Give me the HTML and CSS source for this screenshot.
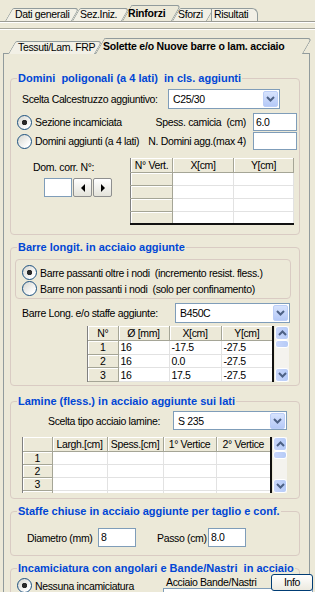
FILE: index.html
```html
<!DOCTYPE html>
<html lang="it">
<head>
    <meta charset="UTF-8">
    <title>Rinforzi</title>
    <link rel="stylesheet" href="styles.css">
</head>
<body>

    <!-- Main tabs -->
    <div class="tabstrip top">
        <div class="tab t-dati">Dati generali</div>
        <div class="tab t-sez">Sez.Iniz.</div>
        <div class="tab t-rinf active">Rinforzi</div>
        <div class="tab t-sforzi">Sforzi</div>
        <div class="tab t-ris">Risultati</div>
    </div>

    <div class="outer">
        <div class="etched"></div>

        <!-- Sub tabs -->
        <div class="tabstrip sub">
            <div class="tab t-tess">Tessuti/Lam. FRP</div>
            <div class="tab t-sol active">Solette e/o Nuove barre o lam. acciaio</div>
        </div>

        <div class="panel">

            <!-- Domini poligonali -->
            <fieldset class="group g-domini">
                <legend>Domini  poligonali (a 4 lati)  in cls. aggiunti</legend>
                <div class="row row-calc">
                    <span class="lbl">Scelta Calcestruzzo aggiuntivo:</span>
                    <div class="combo w-calc">
                        <span class="val">C25/30</span>
                        <span class="drop"><svg width="9" height="6" viewBox="0 0 9 6"><path d="M1 1 L4.5 4.5 L8 1" fill="none" stroke="#4d6185" stroke-width="2"/></svg></span>
                    </div>
                </div>
                <div class="row row-opt first">
                    <span class="radio on">Sezione incamiciata</span>
                    <span class="lbl push">Spess. camicia  (cm)</span>
                    <div class="field w-spess">6.0</div>
                </div>
                <div class="row row-opt">
                    <span class="radio">Domini aggiunti (a 4 lati)</span>
                    <span class="lbl push">N. Domini agg.(max 4)</span>
                    <div class="field w-spess"></div>
                </div>
                <div class="row row-dom">
                    <div class="dom-left">
                        <span class="lbl">Dom. corr. N°:</span>
                        <div class="spin">
                            <div class="field w-spin"></div>
                            <span class="arrow-btn"><i class="tri-left"></i></span>
                            <span class="arrow-btn"><i class="tri-right"></i></span>
                        </div>
                    </div>
                    <table class="grid grid-vert">
                        <colgroup><col class="c42"><col class="c61"><col class="c60"></colgroup>
                        <tr><th>N° Vert.</th><th>X[cm]</th><th>Y[cm]</th></tr>
                        <tr><th></th><td></td><td></td></tr>
                        <tr><th></th><td></td><td></td></tr>
                        <tr><th></th><td></td><td></td></tr>
                        <tr><th></th><td></td><td></td></tr>
                    </table>
                </div>
            </fieldset>

            <!-- Barre longitudinali -->
            <fieldset class="group g-barre">
                <legend>Barre longit. in acciaio aggiunte</legend>
                <div class="subframe">
                    <span class="radio on">Barre passanti oltre i nodi  (incremento resist. fless.)</span>
                    <span class="radio">Barre non passanti i nodi  (solo per confinamento)</span>
                </div>
                <div class="row row-acc">
                    <span class="lbl">Barre Long. e/o staffe aggiunte:</span>
                    <div class="combo w-b450">
                        <span class="val">B450C</span>
                        <span class="drop"><svg width="9" height="6" viewBox="0 0 9 6"><path d="M1 1 L4.5 4.5 L8 1" fill="none" stroke="#4d6185" stroke-width="2"/></svg></span>
                    </div>
                </div>
                <div class="gridbox gb-barre">
                    <table class="grid">
                        <colgroup><col class="c30"><col class="c51"><col class="c52"><col class="c52"></colgroup>
                        <tr><th>N°</th><th>Ø [mm]</th><th>X[cm]</th><th>Y[cm]</th></tr>
                        <tr><th>1</th><td>16</td><td>-17.5</td><td>-27.5</td></tr>
                        <tr><th>2</th><td>16</td><td>0.0</td><td>-27.5</td></tr>
                        <tr><th>3</th><td>16</td><td>17.5</td><td>-27.5</td></tr>
                    </table>
                    <div class="vscroll">
                        <span class="sb-btn"><svg width="9" height="6" viewBox="0 0 9 6"><path d="M1 5 L4.5 1.5 L8 5" fill="none" stroke="#4d6185" stroke-width="2"/></svg></span>
                        <span class="sb-thumb"></span>
                        <span class="sb-track"></span>
                        <span class="sb-btn"><svg width="9" height="6" viewBox="0 0 9 6"><path d="M1 1 L4.5 4.5 L8 1" fill="none" stroke="#4d6185" stroke-width="2"/></svg></span>
                    </div>
                </div>
            </fieldset>

            <!-- Lamine -->
            <fieldset class="group g-lamine">
                <legend>Lamine (fless.) in acciaio aggiunte sui lati</legend>
                <div class="row row-lam">
                    <span class="lbl">Scelta tipo acciaio lamine:</span>
                    <div class="combo w-s235">
                        <span class="val">S 235</span>
                        <span class="drop"><svg width="9" height="6" viewBox="0 0 9 6"><path d="M1 1 L4.5 4.5 L8 1" fill="none" stroke="#4d6185" stroke-width="2"/></svg></span>
                    </div>
                </div>
                <div class="gridbox gb-lamine">
                    <table class="grid">
                        <colgroup><col class="c29"><col class="c55"><col class="c56"><col class="c53"><col class="c55"></colgroup>
                        <tr><th></th><th>Largh.[cm]</th><th>Spess.[cm]</th><th>1° Vertice</th><th>2° Vertice</th></tr>
                        <tr><th>1</th><td></td><td></td><td></td><td></td></tr>
                        <tr><th>2</th><td></td><td></td><td></td><td></td></tr>
                        <tr><th>3</th><td></td><td></td><td></td><td></td></tr>
                        <tr><th></th><td></td><td></td><td></td><td></td></tr>
                    </table>
                    <div class="vscroll">
                        <span class="sb-btn"><svg width="9" height="6" viewBox="0 0 9 6"><path d="M1 5 L4.5 1.5 L8 5" fill="none" stroke="#4d6185" stroke-width="2"/></svg></span>
                        <span class="sb-thumb"></span>
                        <span class="sb-track"></span>
                        <span class="sb-btn"><svg width="9" height="6" viewBox="0 0 9 6"><path d="M1 1 L4.5 4.5 L8 1" fill="none" stroke="#4d6185" stroke-width="2"/></svg></span>
                    </div>
                </div>
            </fieldset>

            <!-- Staffe -->
            <fieldset class="group g-staffe">
                <legend>Staffe chiuse in acciaio aggiunte per taglio e conf.</legend>
                <div class="row row-staffe">
                    <span class="lbl l-diam">Diametro (mm)</span>
                    <div class="field w-staffa">8</div>
                    <span class="lbl l-passo">Passo (cm)</span>
                    <div class="field w-staffa">8.0</div>
                </div>
            </fieldset>

            <!-- Incamiciatura -->
            <fieldset class="group g-incam">
                <legend>Incamiciatura con angolari e Bande/Nastri  in acciaio</legend>
                <div class="row row-incam">
                    <span class="radio on">Nessuna incamiciatura</span>
                    <div class="bande">
                        <span class="lbl">Acciaio Bande/Nastri</span>
                        <div class="combo w-bande"></div>
                    </div>
                    <span class="button">Info</span>
                </div>
            </fieldset>

        </div>
    </div>

</body>
</html>
```

FILE: styles.css
```css
* {
    box-sizing: border-box;
}

body {
    margin: 0;
    width: 315px;
    height: 592px;
    overflow: hidden;
    background: #ece9d8;
    font-family: "Liberation Sans", Arial, sans-serif;
    font-size: 10.5px;
    letter-spacing: -0.35px;
    color: #000;
}

/* ---------- tabs ---------- */

.tabstrip {
    display: flex;
    align-items: flex-end;
    position: relative;
    z-index: 2;
}

.tabstrip.top {
    height: 21px;
    padding-left: 5px;
}

.tabstrip.sub {
    height: 24px;
    padding-left: 8px;
    margin-bottom: -1px;
}

.tab {
    position: relative;
    z-index: 1;
    height: 13px;
    line-height: 12px;
    padding-left: 9px;
    white-space: nowrap;
}

.tab::before {
    content: "";
    position: absolute;
    top: 0;
    bottom: 0;
    left: 0;
    right: 0;
    border: 1px solid #919b9c;
    border-bottom: none;
    border-radius: 2px 4px 0 0;
    background: #f2f0e6;
    transform: skewX(-30deg);
    transform-origin: bottom left;
    z-index: -1;
}

.tab.active {
    z-index: 2;
    height: 16px;
    line-height: 16px;
    font-weight: bold;
    letter-spacing: -0.2px;
}

.tab.active::before {
    background: #ece9d8;
}

.t-dati { width: 67px; padding-left: 10px; }
.t-sez { width: 50px; padding-left: 8px; }
.t-rinf { width: 50px; padding-left: 6px; }
.t-sforzi { width: 35px; padding-left: 6px; }
.t-ris { width: 51px; padding-left: 7px; }
.t-ris::before { transform: none; left: 4px; border-radius: 0 6px 0 0; }

.t-tess { width: 87px; padding-left: 10px; }
.t-sol { width: 208px; padding-left: 8px; }

.outer {
    border-top: 1px solid #9c9c94;
    box-shadow: inset 0 1px #fff;
    padding-top: 6px;
}

.etched {
    height: 2px;
    border-top: 1px solid #a7a69a;
    border-bottom: 1px solid #fff;
}

.panel {
    margin-left: 3px;
    width: 307px;
    height: 540px;
    border-left: 1px solid #919b9c;
    border-top: 1px solid #919b9c;
    border-right: 1px solid #919b9c;
    padding: 18px 0 0 6px;
}

/* ---------- group boxes ---------- */

.group {
    margin: 0;
    padding: 0;
    min-width: 0;
    width: 290px;
    border: 1px solid #d9cbc3;
    border-radius: 4px;
}

.group legend {
    margin-left: 6px;
    padding: 0 1px;
    line-height: 13px;
    font-size: 11px;
    font-weight: bold;
    letter-spacing: 0;
    color: #0046d5;
    white-space: pre;
}

.g-domini { height: 163px; }
.g-barre { height: 145px; margin-top: 6px; }
.g-lamine { height: 104px; margin-top: 9px; }
.g-staffe { height: 51px; margin-top: 6px; }
.g-incam { height: 60px; margin-top: 6px; }

.row {
    display: flex;
    align-items: center;
}

.lbl {
    white-space: pre;
}

.push {
    margin-left: auto;
}

/* ---------- inputs ---------- */

.field {
    height: 18px;
    background: #fff;
    border: 1px solid #7f9db9;
    padding: 2px 0 0 2px;
    line-height: 13px;
}

.combo {
    display: flex;
    align-items: center;
    height: 20px;
    background: #fff;
    border: 1px solid #7f9db9;
    padding: 1px;
}

.combo .val {
    flex: 1;
    padding-left: 3px;
}

.drop {
    width: 15px;
    height: 16px;
    margin-left: auto;
    display: flex;
    align-items: center;
    justify-content: center;
    background: linear-gradient(#d7e3fd, #b5c9f7);
    border: 1px solid #bccef7;
    border-radius: 2px;
}

.radio {
    display: flex;
    align-items: center;
    height: 13px;
    white-space: pre;
}

.radio::before {
    content: "";
    flex: none;
    width: 13px;
    height: 13px;
    margin-right: 3px;
    border: 1px solid #1c5180;
    border-radius: 50%;
    background: linear-gradient(135deg, #d6d6cf, #fff 80%);
}

.radio.on::before {
    background: radial-gradient(circle, #2a2a2a 0 2.4px, transparent 3px), linear-gradient(135deg, #d6d6cf, #fff 80%);
}

/* group 1 */

.row-calc {
    height: 20px;
    margin-top: 4px;
    padding-left: 11px;
}

.w-calc {
    width: 112px;
    margin-left: auto;
    margin-right: 19px;
}

.row-opt {
    height: 18px;
    margin-top: 1px;
    padding-left: 6px;
}

.row-opt.first {
    margin-top: 4px;
}

.w-spess {
    width: 44px;
    margin: 0 2px 0 7px;
}

.row-dom {
    align-items: flex-start;
    margin-top: 8px;
}

.dom-left {
    width: 119px;
    padding: 3px 0 0 22px;
}

.spin {
    display: flex;
    gap: 1px;
    margin: 5px 0 0 11px;
}

.w-spin {
    width: 28px;
    height: 19px;
}

.arrow-btn {
    width: 19px;
    height: 19px;
    display: flex;
    align-items: center;
    justify-content: center;
    border: 1px solid #8e8f8f;
    border-radius: 2px;
    background: linear-gradient(#fff, #e4e3da);
}

.tri-left,
.tri-right {
    width: 0;
    height: 0;
    border-top: 4px solid transparent;
    border-bottom: 4px solid transparent;
}

.tri-left { border-right: 4px solid #000; }
.tri-right { border-left: 4px solid #000; }

/* ---------- flex grids ---------- */

.grid {
    border-collapse: collapse;
    table-layout: fixed;
    background: #fff;
}

.grid th {
    height: 13px;
    padding: 0;
    font-weight: normal;
    text-align: center;
    background: #ece9d8;
    border-right: 1px solid #a5a596;
    border-bottom: 1px solid #a5a596;
    box-shadow: inset 1px 1px #fff;
    white-space: nowrap;
    overflow: hidden;
}

.grid td {
    height: 13px;
    padding: 0 0 0 2px;
    border-right: 1px solid #e2e2e2;
    border-bottom: 1px solid #e2e2e2;
    white-space: nowrap;
}

.grid tr:first-child th {
    height: 14px;
}

.grid-vert {
    width: 163px;
    border-left: 1px solid #808080;
    border-bottom: 2px solid #111;
}

.c42 { width: 42px; }
.c61 { width: 61px; }
.c60 { width: 60px; }
.c30 { width: 30px; }
.c51 { width: 51px; }
.c52 { width: 52px; }
.c29 { width: 29px; }
.c55 { width: 55px; }
.c56 { width: 56px; }
.c53 { width: 53px; }

.gridbox {
    display: flex;
    overflow: hidden;
    border-left: 1px solid #808080;
}

.gridbox .grid {
    border-right: 2px solid #111;
}

.vscroll {
    display: flex;
    flex-direction: column;
    width: 14px;
    margin-left: 1px;
    background: #f4f3ee;
}

.sb-btn {
    height: 14px;
    flex: none;
    display: flex;
    align-items: center;
    justify-content: center;
    background: linear-gradient(90deg, #c8d6fb, #b6cbf7);
    border: 1px solid #fff;
    border-radius: 3px;
}

.sb-thumb {
    height: 8px;
    flex: none;
    background: linear-gradient(90deg, #c8d6fb, #b6cbf7);
    border: 1px solid #fff;
    border-radius: 3px;
}

.sb-track {
    flex: 1;
}

/* group 2 */

.subframe {
    width: 276px;
    height: 40px;
    margin: 5px 0 0 4px;
    padding: 6px 0 0 6px;
    border: 1px solid #d9cbc3;
    border-radius: 4px;
    display: flex;
    flex-direction: column;
    gap: 3px;
}

.row-acc {
    height: 20px;
    margin-top: 4px;
    padding-left: 11px;
}

.w-b450 {
    width: 115px;
    margin-left: auto;
    margin-right: 9px;
}

.gb-barre {
    width: 202px;
    height: 56px;
    margin: 3px 0 0 76px;
}

.gb-barre .grid {
    width: 187px;
}

/* group 3 */

.row-lam {
    height: 19px;
    margin-top: 3px;
    padding-left: 37px;
}

.w-s235 {
    width: 114px;
    height: 19px;
    margin-left: auto;
    margin-right: 12px;
}

.gb-lamine {
    width: 265px;
    height: 56px;
    margin: 7px 0 0 11px;
}

.gb-lamine .grid {
    width: 250px;
}

/* group 4 */

.row-staffe {
    height: 19px;
    margin-top: 10px;
    padding-left: 16px;
}

.l-diam { width: 71px; }
.l-passo { width: 51px; margin-left: 21px; }

.w-staffa {
    width: 38px;
    height: 19px;
}

/* group 5 */

.row-incam {
    align-items: flex-start;
    margin-top: -1px;
    padding-left: 6px;
}

.row-incam .radio {
    width: 149px;
    flex: none;
    margin-top: 5px;
}

.bande {
    width: 105px;
    flex: none;
    padding-top: 2px;
}

.bande .lbl {
    display: block;
    height: 12px;
    line-height: 12px;
}

.w-bande {
    width: 150px;
    margin-left: -3px;
}

.button {
    position: relative;
    width: 42px;
    height: 17px;
    margin-right: -14px;
    text-align: center;
    line-height: 15px;
    border: 1px solid #003c74;
    border-radius: 3px;
    background: linear-gradient(#fff, #ece9df);
}
```
